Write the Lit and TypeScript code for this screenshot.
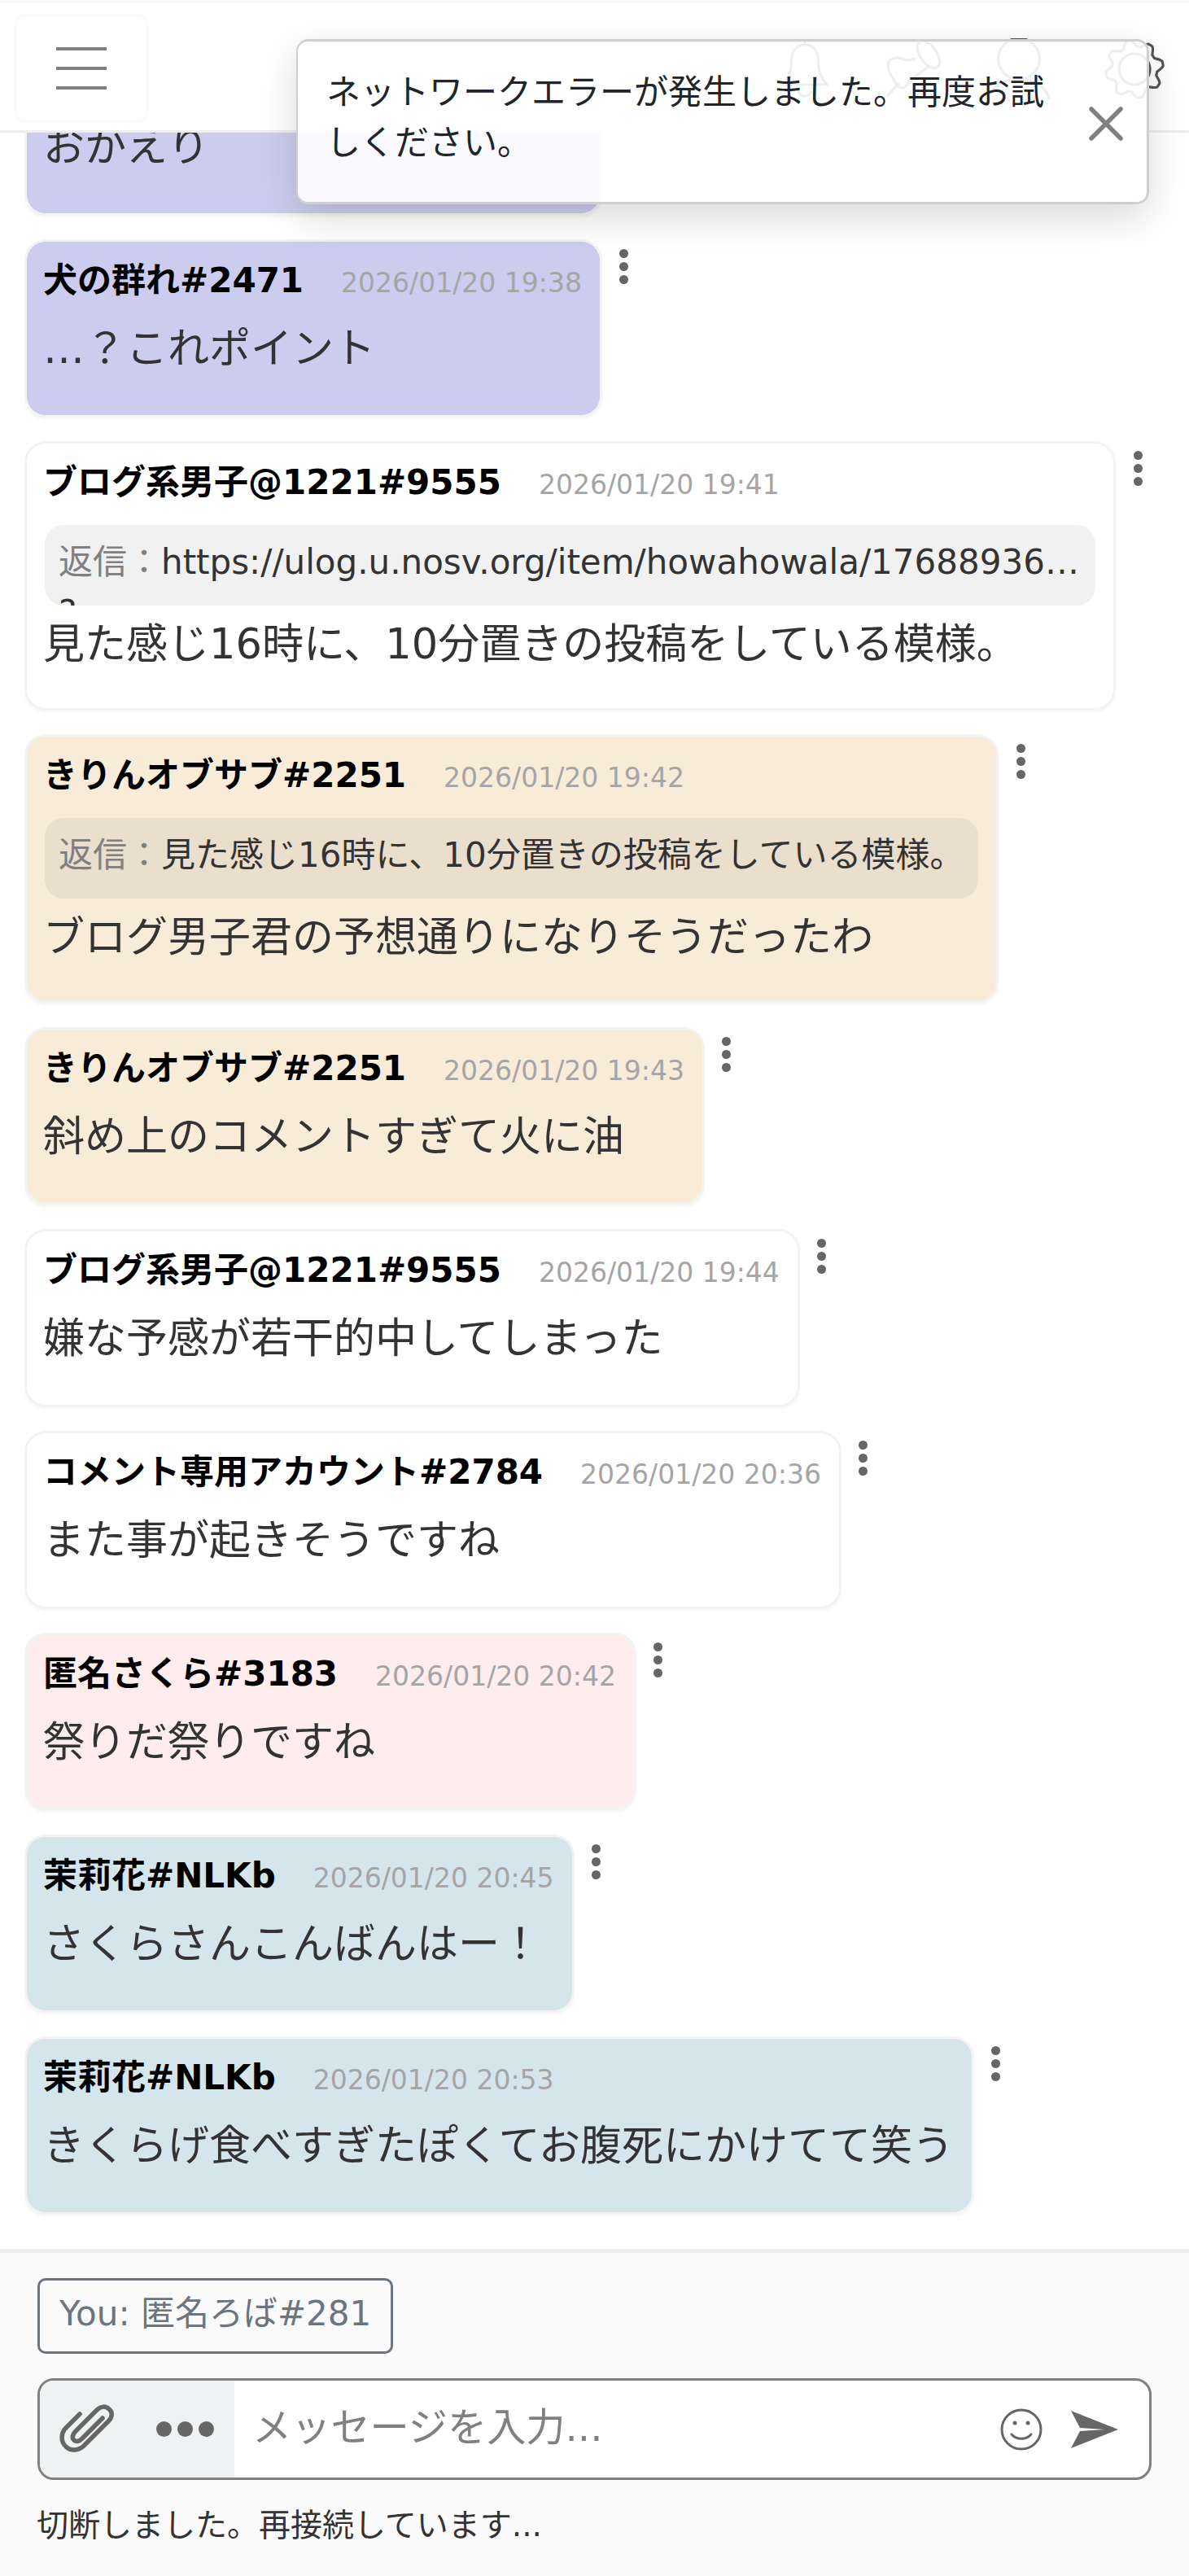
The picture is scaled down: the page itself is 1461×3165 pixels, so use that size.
import { LitElement, html, css, svg } from "lit";
import { customElement } from "lit/decorators.js";

type Msg = { name: string; time: string; text: string; tone: string; reply?: string; reply2?: string };

const MSGS: Msg[] = [
  { name: "犬の群れ#2471", time: "2026/01/20 19:37", text: "おかえり", tone: "purple" },
  { name: "犬の群れ#2471", time: "2026/01/20 19:38", text: "…？これポイント", tone: "purple" },
  { name: "ブログ系男子@1221#9555", time: "2026/01/20 19:41", text: "見た感じ16時に、10分置きの投稿をしている模様。", tone: "white", reply: "https://ulog.u.nosv.org/item/howahowala/1768893600000000000", reply2: "?" },
  { name: "きりんオブサブ#2251", time: "2026/01/20 19:42", text: "ブログ男子君の予想通りになりそうだったわ", tone: "cream", reply: "見た感じ16時に、10分置きの投稿をしている模様。" },
  { name: "きりんオブサブ#2251", time: "2026/01/20 19:43", text: "斜め上のコメントすぎて火に油", tone: "cream" },
  { name: "ブログ系男子@1221#9555", time: "2026/01/20 19:44", text: "嫌な予感が若干的中してしまった", tone: "white" },
  { name: "コメント専用アカウント#2784", time: "2026/01/20 20:36", text: "また事が起きそうですね", tone: "white" },
  { name: "匿名さくら#3183", time: "2026/01/20 20:42", text: "祭りだ祭りですね", tone: "pink" },
  { name: "茉莉花#NLKb", time: "2026/01/20 20:45", text: "さくらさんこんばんはー！", tone: "blue" },
  { name: "茉莉花#NLKb", time: "2026/01/20 20:53", text: "きくらげ食べすぎたぽくてお腹死にかけてて笑う", tone: "blue" },
];

function gearPath(): string {
  const pts: string[] = [];
  for (let i = 0; i < 160; i++) {
    const a = (i / 160) * Math.PI * 2;
    const r = 10 + 1.5 * Math.max(-0.8, Math.min(0.8, Math.cos(8 * a + Math.PI / 2)));
    pts.push(`${(12 + r * Math.cos(a)).toFixed(2)} ${(12 + r * Math.sin(a)).toFixed(2)}`);
  }
  return "M" + pts.join("L") + "Z";
}

@customElement("app-root")
export class AppRoot extends LitElement {
  static styles = css`
    :host {
      display: flex;
      flex-direction: column;
      position: relative;
      width: 1461px;
      height: 3165px;
      overflow: hidden;
      background: #fff;
      font-family: "DejaVu Sans", "Noto Sans CJK JP", sans-serif;
      font-size: 42px;
      line-height: 1.5;
      color: #333;
    }
    .header {
      flex: none;
      height: 163px;
      box-sizing: border-box;
      border-top: 4px solid #f8f8f8;
      border-bottom: 3px solid #eeeeee;
      background: #fff;
      display: flex;
      align-items: flex-start;
      justify-content: space-between;
      padding: 14px 29px 0 18px;
      position: relative;
      z-index: 2;
    }
    .burger {
      width: 164px;
      height: 132px;
      box-sizing: border-box;
      border: 2px solid #fafafa;
      border-radius: 12px;
      display: flex;
      flex-direction: column;
      align-items: center;
      justify-content: center;
      gap: 20px;
    }
    .burger i {
      display: block;
      width: 62px;
      height: 4px;
      background: #808080;
    }
    .hicons {
      display: flex;
      align-items: center;
      margin-top: 29px;
    }
    .hicons svg {
      display: block;
      width: 76px;
      height: 76px;
      fill: none;
      stroke: #555;
      stroke-width: 1;
    }
    .hicons svg.pin { margin-left: 60px; }
    .hicons svg.person { margin-left: 51px; }
    .hicons svg.gear { margin-left: 66px; }
    .toast {
      position: absolute;
      left: 364px;
      top: 48px;
      width: 1048px;
      height: 203px;
      box-sizing: border-box;
      background: rgba(255, 255, 255, 0.9);
      border: 3px solid #cfcfcf;
      border-left-width: 2px;
      border-radius: 15px;
      box-shadow: 0 16px 48px rgba(0, 0, 0, 0.15);
      padding: 32px 36px 0 35px;
      z-index: 5;
      display: flex;
      justify-content: space-between;
      color: #212529;
    }
    .toast p {
      margin: 0;
      width: 890px;
      line-height: 62.4px;
    }
    .toast svg {
      flex: none;
      width: 42px;
      height: 42px;
      margin-top: 48px;
      margin-right: -7px;
      stroke: #808080;
      stroke-width: 5.5;
      stroke-linecap: round;
      fill: none;
    }
    .list {
      flex: 1;
      min-height: 0;
      overflow: hidden;
      display: flex;
      flex-direction: column;
      justify-content: flex-end;
      gap: 35px;
      padding: 0 33px 45px;
    }
    .row {
      display: flex;
      align-items: flex-start;
      flex: none;
    }
    .bubble {
      box-sizing: border-box;
      max-width: 1335px;
      min-width: 0;
      padding: 16px 22px 0 20px;
      border-radius: 23px;
      box-shadow: 0 0 0 3px #f2f4f4, 0 3px 3px 3px rgba(0, 0, 0, 0.03);
    }
    .purple { background: #ccccee; }
    .white { background: #ffffff; }
    .cream { background: #f8ebd8; }
    .pink { background: #ffecec; }
    .blue { background: #d5e5ec; }
    .head {
      display: flex;
      align-items: baseline;
      gap: 46px;
      height: 64px;
      white-space: nowrap;
    }
    .name {
      font-weight: 700;
      color: #000;
    }
    .time {
      font-size: 33px;
      color: #a5a5a5;
    }
    .reply {
      height: 99px;
      box-sizing: border-box;
      margin: 20px 0 10px 2px;
      padding: 15px 18px 0 17px;
      border-radius: 23px;
      overflow: hidden;
      background: rgba(0, 0, 0, 0.055);
    }
    .reply div {
      line-height: 62.4px;
      white-space: nowrap;
      overflow: hidden;
      text-overflow: ellipsis;
    }
    .reply .lbl { color: #808080; }
    .body {
      font-size: 51px;
      line-height: 75px;
      margin: 14px 0 44px;
      white-space: nowrap;
    }
    .reply + .body { margin: 0 0 41px; }
    .more {
      flex: none;
      width: 18px;
      margin: 9px 0 0 21px;
      display: flex;
      flex-direction: column;
      align-items: center;
      gap: 5px;
    }
    .more i {
      width: 11px;
      height: 11px;
      border-radius: 50%;
      background: #666;
    }
    .footer {
      flex: none;
      height: 402px;
      box-sizing: border-box;
      background: #fafafa;
      border-top: 5px solid #eeeeee;
      padding: 31px 46px 0 45px;
    }
    .who {
      box-sizing: border-box;
      width: fit-content;
      height: 93px;
      margin-left: 1px;
      padding: 9px 24px;
      border: 3px solid #6c757d;
      border-radius: 10px;
      color: #6c757d;
      white-space: nowrap;
    }
    .input {
      display: flex;
      align-items: center;
      box-sizing: border-box;
      width: 1369px;
      height: 125px;
      margin: 30px 0 0 1px;
      border: 3px solid #808080;
      border-radius: 20px;
      overflow: hidden;
      background: #fff;
    }
    .addon {
      flex: none;
      width: 239px;
      height: 100%;
      background: #eef2f3;
      display: flex;
      align-items: center;
      padding-left: 23px;
      box-sizing: border-box;
      gap: 50px;
    }
    .clip { width: 70px; height: 62px; flex: none; fill: none; stroke: #666; stroke-width: 5.5; stroke-linecap: round; }
    .dots { display: flex; gap: 7px; }
    .dots i { width: 19px; height: 19px; border-radius: 50%; background: #666; }
    .ph {
      flex: 1;
      padding: 0 0 4px 22px;
      font-size: 48.2px;
      color: #808080;
      white-space: nowrap;
    }
    .smile { flex: none; width: 52px; height: 52px; fill: none; stroke: #666; stroke-width: 3; stroke-linecap: round; }
    .send { flex: none; width: 60px; height: 48px; margin: 0 37px 0 34px; fill: #666; }
    .status {
      margin-top: 27px;
      font-size: 39px;
      line-height: 58px;
      white-space: nowrap;
      color: #333;
    }
  `;

  private bubble(m: Msg) {
    return html`<div class="row">
      <div class="bubble ${m.tone}">
        <div class="head"><span class="name">${m.name}</span><span class="time">${m.time}</span></div>
        ${m.reply
          ? html`<div class="reply">
              <div><span class="lbl">返信：</span>${m.reply}</div>
              ${m.reply2 ? html`<div>${m.reply2}</div>` : ""}
            </div>`
          : ""}
        <div class="body">${m.text}</div>
      </div>
      <div class="more"><i></i><i></i><i></i></div>
    </div>`;
  }

  render() {
    return html`
      <div class="header">
        <div class="burger"><i></i><i></i><i></i></div>
        <div class="hicons">
          <svg viewBox="0 0 24 24"><path d="M12 .5v2M12 2.500c-3.400 0-5.200 2.800-5.200 6.200 0 4.600-1.400 7-3.300 9.300h17c-1.900-2.300-3.300-4.700-3.300-9.300 0-3.400-1.800-6.200-5.200-6.200zM9.500 20.500a2.600 2.600 0 0 0 5 0"/></svg>
          <svg class="pin" viewBox="0 0 24 24"><ellipse cx="17" cy="6.300" rx="3.200" ry="6" transform="rotate(-35 17 6.300)"/><path d="M12 8 8 8.500C5 6.500 1.500 8 1.300 10c0 3 2 6.500 4.500 9 1.500.8 3-.5 3.800-2.500l7.500-5.500M5.500 17.500 1 22.500"/></svg>
          <svg class="person" viewBox="0 0 24 24"><circle cx="12" cy="8" r="8"/><path d="M0 24c1.500-5 5-8 12-8s10.500 3 12 8"/></svg>
          <svg class="gear" viewBox="0 0 24 24"><circle cx="12" cy="12" r="6"/>${svg`<path d=${gearPath()}/>`}</svg>
        </div>
      </div>
      <div class="toast">
        <p>ネットワークエラーが発生しました。再度お試しください。</p>
        <svg viewBox="0 0 42 42"><path d="M3 3l36 36M39 3L3 39"/></svg>
      </div>
      <div class="list">${MSGS.map((m) => this.bubble(m))}</div>
      <div class="footer">
        <div class="who">You: 匿名ろば#281</div>
        <div class="input">
          <div class="addon">
            <svg class="clip" viewBox="0 0 70 62"><path d="M26 12 9 29C2 36 3 47 9 52c6 6 16 5 22-1L61 21c6-6 5-12 1-15-4-4-10-4-15 1L21 33c-4 4-5 9-2 11 3 3 7 1 10-2L54 17"/></svg>
            <div class="dots"><i></i><i></i><i></i></div>
          </div>
          <div class="ph">メッセージを入力...</div>
          <svg class="smile" viewBox="0 0 52 52"><circle cx="26" cy="26" r="24"/><path d="M14 32c6 7 18 7 24 0"/><circle cx="18" cy="18" r="2.500" fill="#666" stroke="none"/><circle cx="34" cy="18" r="2.500" fill="#666" stroke="none"/></svg>
          <svg class="send" viewBox="0 0 60 48"><path d="M1 1 59 24 1 47 12 26 42 24 12 22z"/></svg>
        </div>
        <div class="status">切断しました。再接続しています...</div>
      </div>
    `;
  }
}
